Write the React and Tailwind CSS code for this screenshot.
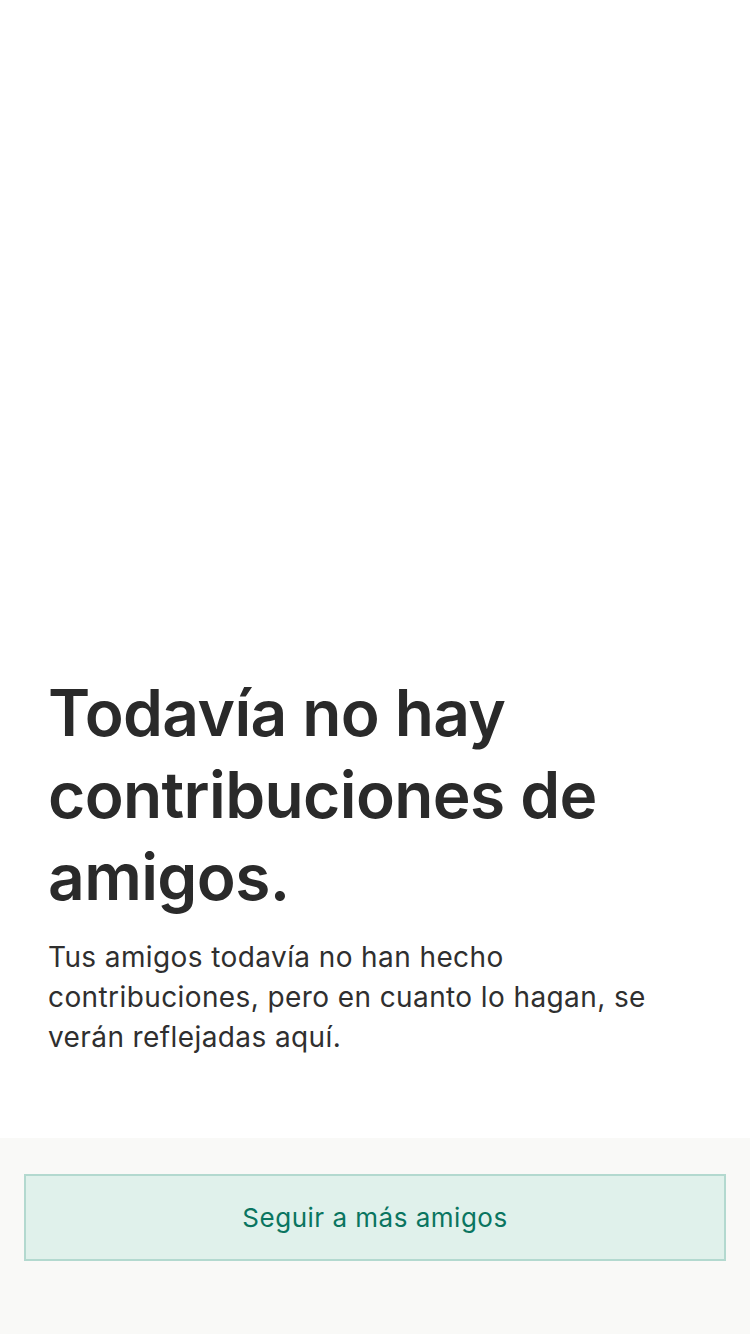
import React from 'react';

const App = () => {
  return (
    <div
      className="flex h-[1334px] w-[750px] flex-col bg-white"
      style={{ fontFamily: 'Inter, "Noto Sans", sans-serif' }}
    >
      <div className="flex flex-1 flex-col justify-end px-12 pb-[81px]">
        <h1 className="text-[64px] font-semibold leading-[82px] tracking-[-0.6px] text-[#2a2a2a]">
          Todavía no hay contribuciones de amigos.
        </h1>
        <p className="mt-[19px] text-[28px] leading-[40px] tracking-[0.4px] text-[#2f2f2f]">
          Tus amigos todavía no han hecho contribuciones, pero en cuanto lo hagan, se verán reflejadas aquí.
        </p>
      </div>
      <div className="h-[196px] bg-[#f9f9f7] px-6 pt-9">
        <button className="flex h-[87px] w-full items-center justify-center border-2 border-[#b3d9cf] bg-[#e0f1eb] text-[26px] tracking-[0.5px] text-[#0a7560]">
          Seguir a más amigos
        </button>
      </div>
    </div>
  );
};

export default App;
